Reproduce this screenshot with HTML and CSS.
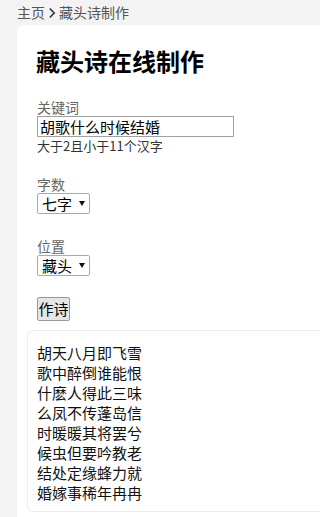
FILE: index.html
```html
<!DOCTYPE html>
<html lang="zh-CN">
<head>
<meta charset="utf-8">
<title>藏头诗在线制作</title>
<link rel="stylesheet" href="styles.css">
</head>
<body>
<nav class="crumbs">
  <a class="crumb" href="#">主页</a>
  <svg class="chev" width="8" height="12" viewBox="0 0 8 12"><path d="M1.8 1.5 L6.2 6 L1.8 10.5" fill="none" stroke="#333" stroke-width="1.6"/></svg>
  <span class="crumb">藏头诗制作</span>
</nav>
<main class="card">
  <form class="form">
    <h1 class="title">藏头诗在线制作</h1>
    <div class="group g1">
      <label class="label">关键词</label>
      <input class="text" type="text" value="胡歌什么时候结婚">
      <div class="hint">大于2且小于11个汉字</div>
    </div>
    <div class="group g2">
      <label class="label">字数</label>
      <span class="sel"><select class="select"><option>七字</option><option>五字</option></select></span>
    </div>
    <div class="group g3">
      <label class="label">位置</label>
      <span class="sel"><select class="select"><option>藏头</option><option>藏尾</option></select></span>
    </div>
    <button class="btn" type="button">作诗</button>
  </form>
  <div class="result">
    <div class="line">胡天八月即飞雪</div>
    <div class="line">歌中醉倒谁能恨</div>
    <div class="line">什麽人得此三味</div>
    <div class="line">么凤不传蓬岛信</div>
    <div class="line">时暖暖其将罢兮</div>
    <div class="line">候虫但要吟教老</div>
    <div class="line">结处定缘蜂力就</div>
    <div class="line">婚嫁事稀年冉冉</div>
  </div>
</main>
</body>
</html>
```
FILE: styles.css
```css
html, body {
  margin: 0;
  padding: 0;
}
body {
  background: #f3f3f3;
  font-family: "Noto Sans CJK SC", "Noto Sans", sans-serif;
  color: #000;
  padding-left: 17px;
}
.crumbs {
  display: flex;
  align-items: center;
  height: 25px;
  font-size: 14px;
  line-height: 25px;
  color: #555;
}
.crumb {
  color: #555;
  text-decoration: none;
}
.chev {
  margin: 0 3px 0 3px;
}
.card {
  background: #fff;
  border-radius: 7px 0 0 0;
  padding: 19px 0 12px 10px;
  min-height: 480px;
}
.form {
  display: flex;
  flex-direction: column;
  align-items: flex-start;
  padding-left: 10px;
}
.title {
  margin: 0 0 20px -1px;
  font-size: 24px;
  line-height: 34px;
  font-weight: bold;
}
.group {
  display: flex;
  flex-direction: column;
  align-items: flex-start;
}
.g1 { margin-bottom: 21px; }
.g2 { margin-bottom: 23px; }
.g3 { margin-bottom: 21px; }
.label {
  font-size: 14px;
  line-height: 18px;
  color: #666;
}
.text {
  box-sizing: border-box;
  width: 197px;
  height: 21px;
  margin: 0;
  padding: 0 2px;
  border: 1px solid #a0a0a0;
  border-radius: 0;
  font-family: inherit;
  font-size: 15px;
  line-height: 19px;
  color: #000;
  outline: none;
}
.hint {
  font-size: 13px;
  line-height: 17px;
  color: #333;
}
.sel {
  position: relative;
  display: flex;
}
.sel::after {
  content: "";
  position: absolute;
  left: 42px;
  top: 8px;
  border-left: 3px solid transparent;
  border-right: 3px solid transparent;
  border-top: 5px solid #111;
  pointer-events: none;
}
.select {
  -webkit-appearance: none;
  appearance: none;
  box-sizing: border-box;
  width: 53px;
  height: 21px;
  margin: 0;
  padding: 0 0 0 4px;
  border: 1px solid #aaa;
  border-radius: 2px;
  background: #fff;
  font-family: inherit;
  font-size: 15px;
  line-height: 19px;
  color: #000;
}
.btn {
  display: block;
  box-sizing: border-box;
  width: 33px;
  height: 24px;
  margin: 0;
  padding: 0;
  border: 1px solid #999;
  border-radius: 2px;
  background: #e6e6e6;
  font-family: inherit;
  font-size: 15px;
  line-height: 22px;
  color: #000;
}
.result {
  margin-top: 9px;
  border: 1px solid #eee;
  border-right: 0;
  border-radius: 6px 0 0 6px;
  padding: 12px 10px 8px 9px;
  font-size: 15px;
  line-height: 20px;
  color: #111;
}
.line {
  height: 20px;
}
```
